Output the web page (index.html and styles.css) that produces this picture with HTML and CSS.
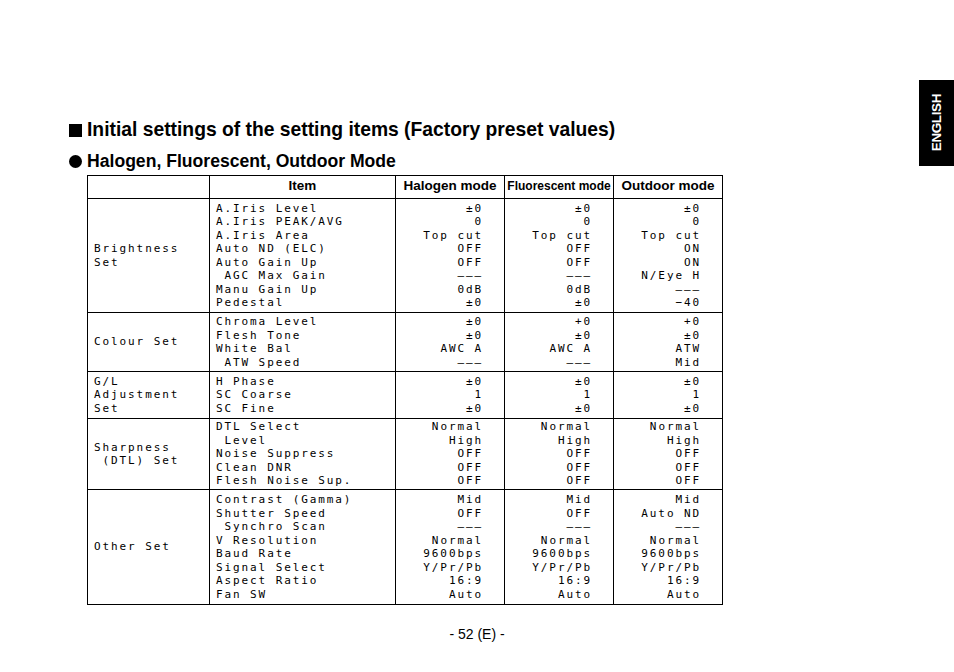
FILE: index.html
```html
<!DOCTYPE html>
<html lang="en">
<head>
<meta charset="utf-8">
<title>Initial settings</title>
<link rel="stylesheet" href="styles.css">
</head>
<body>
<div class="page">
  <div class="sheet">
    <main class="content">
      <h1 class="title"><span class="sq"></span>Initial settings of the setting items (Factory preset values)</h1>
      <h2 class="subtitle"><span class="dot"></span>Halogen, Fluorescent, Outdoor Mode</h2>
      <table class="grid">
        <colgroup>
          <col class="c-grp"><col class="c-item"><col class="c-val"><col class="c-val"><col class="c-val">
        </colgroup>
        <thead>
          <tr class="r-head">
            <th></th>
            <th>Item</th>
            <th>Halogen mode</th>
            <th class="small">Fluorescent mode</th>
            <th>Outdoor mode</th>
          </tr>
        </thead>
        <tbody>
          <tr class="r-bright">
            <td class="grp">Brightness
Set</td>
            <td class="item">A.Iris Level
A.Iris PEAK/AVG
A.Iris Area
Auto ND (ELC)
Auto Gain Up
 AGC Max Gain
Manu Gain Up
Pedestal</td>
            <td class="val">±0
0
Top cut
OFF
OFF
–––
0dB
±0</td>
            <td class="val">±0
0
Top cut
OFF
OFF
–––
0dB
±0</td>
            <td class="val">±0
0
Top cut
ON
ON
N/Eye H
–––
−40</td>
          </tr>
          <tr class="r-colour">
            <td class="grp">Colour Set</td>
            <td class="item">Chroma Level
Flesh Tone
White Bal
 ATW Speed</td>
            <td class="val">±0
±0
AWC A
–––</td>
            <td class="val">+0
±0
AWC A
–––</td>
            <td class="val">+0
±0
ATW
Mid</td>
          </tr>
          <tr class="r-gl">
            <td class="grp">G/L
Adjustment
Set</td>
            <td class="item">H Phase
SC Coarse
SC Fine</td>
            <td class="val">±0
1
±0</td>
            <td class="val">±0
1
±0</td>
            <td class="val">±0
1
±0</td>
          </tr>
          <tr class="r-sharp">
            <td class="grp">Sharpness
 (DTL) Set</td>
            <td class="item">DTL Select
 Level
Noise Suppress
Clean DNR
Flesh Noise Sup.</td>
            <td class="val">Normal
High
OFF
OFF
OFF</td>
            <td class="val">Normal
High
OFF
OFF
OFF</td>
            <td class="val">Normal
High
OFF
OFF
OFF</td>
          </tr>
          <tr class="r-other">
            <td class="grp">Other Set</td>
            <td class="item">Contrast (Gamma)
Shutter Speed
 Synchro Scan
V Resolution
Baud Rate
Signal Select
Aspect Ratio
Fan SW</td>
            <td class="val">Mid
OFF
–––
Normal
9600bps
Y/Pr/Pb
16:9
Auto</td>
            <td class="val">Mid
OFF
–––
Normal
9600bps
Y/Pr/Pb
16:9
Auto</td>
            <td class="val">Mid
Auto ND
–––
Normal
9600bps
Y/Pr/Pb
16:9
Auto</td>
          </tr>
        </tbody>
      </table>
    </main>
    <aside class="tab"><span class="tab-text">ENGLISH</span></aside>
  </div>
  <footer class="pageno">- 52 (E) -</footer>
</div>
</body>
</html>
```
FILE: styles.css
```css
html, body {
  margin: 0;
  padding: 0;
  background: #fff;
  color: #000;
}

body {
  font-family: "Liberation Sans", Arial, sans-serif;
}

.page {
  width: 954px;
  height: 672px;
  display: flex;
  flex-direction: column;
}

.sheet {
  display: flex;
  align-items: flex-start;
}

.content {
  flex: 1;
  padding: 120px 0 0 69px;
}

.title {
  display: flex;
  align-items: center;
  gap: 5px;
  margin: 0;
  font-size: 19.3px;
  line-height: 20px;
  font-weight: bold;
}

.sq {
  width: 13px;
  height: 13px;
  background: #000;
  flex: none;
}

.subtitle {
  display: flex;
  align-items: center;
  gap: 5px;
  margin: 12px 0 0 0;
  font-size: 17.6px;
  line-height: 19px;
  font-weight: bold;
}

.dot {
  width: 13px;
  height: 13px;
  border-radius: 50%;
  background: #000;
  flex: none;
}

.grid {
  margin: 4px 0 0 18px;
  border-collapse: collapse;
  table-layout: fixed;
  width: 635px;
  border: 1px solid #000;
}

.c-grp { width: 122px; }
.c-item { width: 186px; }
.c-val { width: 109px; }

.grid th,
.grid td {
  border: 1px solid #000;
  padding: 0;
  vertical-align: middle;
}

.grid th {
  font-family: "Liberation Sans", Arial, sans-serif;
  font-weight: bold;
  font-size: 13.5px;
  line-height: 16px;
  text-align: center;
  padding-bottom: 3px;
  white-space: nowrap;
}

.grid th.small {
  font-size: 12px;
}

.r-head { height: 23px; }
.r-bright { height: 114px; }
.r-colour { height: 59px; }
.r-gl { height: 47px; }
.r-sharp { height: 71px; }
.r-other { height: 115px; }

.grid td {
  font-family: "DejaVu Sans Mono", "Liberation Mono", monospace;
  font-size: 11px;
  line-height: 13.5px;
  letter-spacing: 1.9px;
  white-space: pre;
}

.grid td.grp,
.grid td.item {
  text-align: left;
  padding-left: 6px;
}

.grid td.val {
  text-align: right;
  padding-right: 21px;
}

.tab {
  flex: none;
  width: 35px;
  height: 86px;
  margin-top: 80px;
  background: #000;
  display: flex;
  align-items: center;
  justify-content: center;
}

.tab-text {
  writing-mode: vertical-rl;
  transform: rotate(180deg);
  color: #fff;
  font-weight: bold;
  font-size: 13.5px;
  letter-spacing: -0.4px;
  line-height: 14px;
}

.pageno {
  margin-top: 21px;
  text-align: center;
  font-size: 14px;
  line-height: 16px;
}
```
